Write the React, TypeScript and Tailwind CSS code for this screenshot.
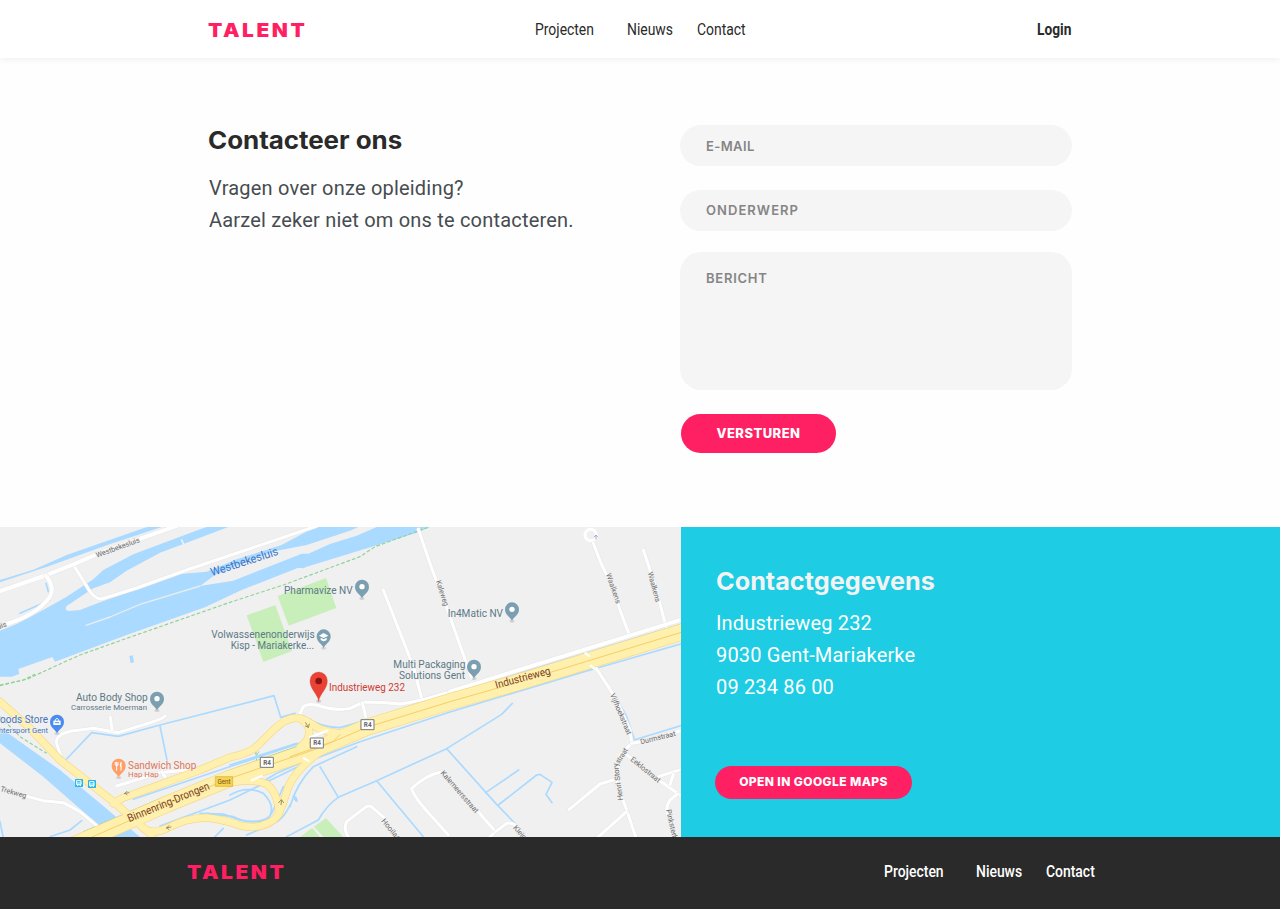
import React from 'react';

const water = '#aadaff';

function Pin({ x, y, color, children }: { x: number; y: number; color: string; children?: React.ReactNode }) {
  return (
    <g transform={`translate(${x} ${y})`}>
      <ellipse cx="0" cy="30" rx="8" ry="4" fill="#000" opacity=".12" />
      <path d="M0 30C-3 17-21 13-21-6A21 21 0 0 1 21-6C21 13 3 17 0 30Z" fill={color} />
      {children ?? <circle cx="0" cy="-6" r="8" fill="#fff" />}
    </g>
  );
}

function Shield({ x, y }: { x: number; y: number }) {
  return (
    <g transform={`translate(${x} ${y})`}>
      <rect x="-19" y="-15" width="38" height="30" fill="#fff" stroke="#777" strokeWidth="3" />
      <text x="0" y="7" textAnchor="middle" fontSize="19" fontWeight="700" fill="#666">R4</text>
    </g>
  );
}

function Road({ d, w = 9 }: { d: string; w?: number }) {
  return (
    <>
      <path d={d} stroke="#e6e6e6" strokeWidth={w + 3} />
      <path d={d} stroke="#fff" strokeWidth={w} />
    </>
  );
}

/** A map label squeezed or stretched to exactly `w` map units. */
function Label({ x, y, r = 0, w, size, fill, halo, children }: {
  x: number; y: number; r?: number; w: number; size?: number; fill?: string; halo?: boolean; children: string;
}) {
  return (
    <text
      transform={`translate(${x} ${y}) rotate(${r})`}
      fontSize={size}
      fill={fill}
      textLength={w}
      lengthAdjust="spacingAndGlyphs"
      stroke={halo === false ? 'none' : undefined}
    >
      {children}
    </text>
  );
}

const ramps = [
  'M0 545L90 625L180 720L340 845L455 945',
  'M340 850L370 833L450 805L600 750L690 712Q750 700 775 675L820 630Q860 590 895 594Q915 598 940 615Q970 638 1040 642',
  'M895 594Q925 605 928 635Q928 660 900 682',
  'M430 925Q460 945 500 925Q560 893 620 893Q680 900 725 918Q800 930 835 885Q850 850 865 800Q890 745 960 696',
  'M690 788Q760 775 800 792Q835 820 837 880',
];
const highway = 'M220 975L290 945L500 853L690 775L940 690L1100 622L1350 545L1550 488L1760 424L2060 332';

const mainRoads = [
  'M0 213L140 165L220 133L300 99L430 53L540 14',
  'M138 167Q165 200 150 230Q110 285 20 312L-5 325',
  'M1350 515L1550 452L2060 294',
];

const minorRoads = [
  'M222 137L262 202Q280 236 305 237L410 204L560 150L720 96L850 52L950 18',
  'M1150 210L1240 440L1265 535',
  'M1255 28L1295 145L1350 290L1415 475',
  'M1780 70L1803 130L1835 195L1860 270L1890 350',
  'M1930 90L1965 195L1998 320',
  'M898 585L910 560Q920 550 950 555Q1010 575 1050 565L1090 547Q1140 545 1200 552Q1260 545 1350 515',
  'M1087 548L1097 590',
  'M183 712L170 670Q165 645 210 634L280 625L355 638L460 605Q490 595 495 588',
  'M331 592L336 630',
  'M350 798L480 758L560 750',
  'M485 755L495 770',
  'M60 824L130 842L190 848L240 875L300 925',
  'M1320 757Q1280 765 1235 805Q1240 830 1300 895L1345 945',
  'M1155 895L1120 865Q1108 850 1088 868L1040 905Q1025 935 1060 970',
  'M1430 870L1487 935L1465 955',
  'M1487 935L1520 910Q1535 905 1550 920L1580 955',
  'M1785 440L1825 500L1850 540L1890 630L1895 670L1860 705L1850 790L1880 870L1910 960',
  'M1895 670L1925 665L2060 627',
  'M1875 700L1960 768L2060 840',
  'M1850 777L1800 792L1708 868',
  'M1880 875L1790 955',
  'M1975 770L2060 743',
  'M2032 822L2010 840Q1990 870 2010 900L2035 970',
  'M2020 762L2010 795',
];

const streams = [
  'M200 717L275 638L355 649L480 615L822 527L842 592L885 580',
  'M480 618L502 725',
  'M910 588Q960 622 1020 623L1100 600L1350 520L1550 463L2060 308',
  'M480 918L690 840L935 720L1080 665L1350 576L1740 459L2060 367',
  'M400 838L720 730L900 670',
  'M690 735L890 670',
  'M800 778L830 760L940 712',
  'M690 825Q740 795 790 820Q830 860 805 895Q750 915 700 890L620 880',
  'M600 880L670 882L720 900Q800 920 820 870L850 800',
  'M870 860Q890 790 940 740L1070 680',
  'M740 945L820 910Q850 900 870 855',
  'M960 740L1015 832',
  'M860 950L955 900Q980 855 1015 832L1130 782L1340 686L1505 583L1537 550',
  'M1130 782L1270 950',
  'M1340 686L1490 853L1545 910',
  'M1457 818L1556 750',
  'M1495 855L1610 765L1620 763L1656 787L1638 823L1656 848',
  'M1805 465L1835 510L1880 590L1902 655',
  'M1902 660L2060 612',
  'M150 950L210 930L245 902',
  'M0 905L10 955',
  'M640 955L670 925',
  'M60 280L150 240M138 190L145 215',
];

function CityMap() {
  return (
    <svg
      className="block h-[310px] w-[681px] shrink-0"
      viewBox="0 21 2043 930"
      fill="none"
      fontFamily="Roboto, sans-serif"
      strokeLinejoin="round"
      strokeLinecap="round"
    >
      <rect x="0" y="21" width="2043" height="930" fill="#f0f0f0" />
      <g fill={water}>
        <path d="M0 180L100 149L200 105L430 25L442 21H485L320 76L150 137L0 187Z" />
        <path d="M0 332L50 312L120 275L200 230L280 178L310 150L400 103L500 65L600 28L620 21H685L560 68L480 98L380 152L330 187L280 205L200 258Q192 270 205 273L240 270L310 243L540 162L620 155L710 118L845 75L945 21H1075L1050 32L920 75L830 92L720 133L645 165L600 198L700 182L890 107L905 101L925 101L990 72L1070 47L1130 21H1290L1250 38L1150 70L920 140L910 145L895 143L720 212L615 262L380 345L165 425L157 411L55 447L58 462L35 470L0 470Z" />
        <path d="M0 622L60 665L180 750L300 850L420 951H340L250 875L130 770L0 670Z" />
        <path d="M388 408L398 406L402 427L392 430Z" />
        <path d="M878 825Q895 828 893 847Q880 845 878 825Z" />
      </g>
      <path d="M258 316L330 291L420 253L600 198" stroke="#e8eeee" strokeWidth="4" />
      <path d="M545 60L550 70" stroke="#eef4f7" strokeWidth="5" />
      <g fill="#c8efba">
        <path d="M833 228L978 174L1009 264L866 317Z" />
        <path d="M740 286L826 255L876 393L790 426Z" />
        <path d="M900 951L937 924L960 951Z" />
        <path d="M942 920L978 894L1030 951H970Z" />
      </g>
      <g stroke="#8fd19a" strokeWidth="3.5" strokeDasharray="11 6" strokeLinecap="butt">
        <path d="M0 495L80 478L180 432L240 405L380 355L690 247L850 195L1080 110L1125 80L1285 22" />
        <path d="M0 497L70 480L105 463" />
        <path d="M0 590L60 650L140 700" />
      </g>
      <path d="M250 935L470 840L690 750L900 676M768 695L770 725M762 695L770 705L777 695" stroke="#99d5a0" strokeWidth="3" />
      <g stroke={water} strokeWidth="5">
        {streams.map((d) => <path key={d} d={d} />)}
      </g>
      {minorRoads.map((d) => <Road key={d} d={d} />)}
      {mainRoads.map((d) => <Road key={d} d={d} w={12} />)}
      <circle cx="1772" cy="45" r="17" fill="#f0f0f0" stroke="#fff" strokeWidth="9" />
      <path d="M1783 51L1788 45L1792 50M1788 47V57" stroke="#a5a5d6" strokeWidth="3" />
      <g stroke="#f5d98a">
        {ramps.map((d) => <path key={d} d={d} strokeWidth="24" />)}
        <path d={highway} strokeWidth="51" />
      </g>
      <g stroke="#fff0ae">
        {ramps.map((d) => <path key={d} d={d} strokeWidth="20" />)}
        <path d={highway} strokeWidth="47" />
      </g>
      <path d={highway} stroke="#f4cf6a" strokeWidth="3" />
      <path d="M1020 644L1000 664L870 710" stroke="#f4cf6a" strokeWidth="3" />
      <path d="M930 652L982 632M755 781L785 768M912 715L925 722M1757 400L1766 407M1772 437L1785 447" stroke="#fff" strokeWidth="7" />
      <g stroke="#9b9165" strokeWidth="3">
        <path d="M373 821L387 818M375 820L381 814M375 820L381 824M499 924L513 921M500 923L507 917M500 923L507 929M917 608L925 622M916 618L925 622L928 612M843 854L845 840M836 848L844 839L851 848" />
      </g>

      <Shield x={1103} y={614} />
      <Shield x={951} y={669} />
      <Shield x={801} y={727} />
      <rect x="647" y="770" width="51" height="29" fill="#fbd24d" stroke="#cfae42" strokeWidth="2" />
      <text x="672" y="791" textAnchor="middle" fontSize="19" fill="#6b5820">Gent</text>

      <g fontSize="22" fill="#6c6c6c" stroke="#f0f0f0" strokeWidth="4" paintOrder="stroke">
        <Label x={291} y={113} r={-20} w={138}>Westbekesluis</Label>
        <Label x={-22} y={334} r={-20} w={46}>sluis</Label>
        <Label x={1308} y={184} r={72} w={79}>Kaleweg</Label>
        <Label x={1818} y={163} r={71} w={94}>Waalkens</Label>
        <Label x={1943} y={158} r={75} w={92}>Waalkens</Label>
        <Label x={1830} y={524} r={67} w={132}>Vijfhoekstraat</Label>
        <Label x={1923} y={673} r={-14} w={108}>Durmstraat</Label>
        <Label x={1890} y={721} r={39} w={108}>Eeklostraat</Label>
        <Label x={1869} y={840} r={-98} w={112}>Henri Story</Label>
        <Label x={1858} y={732} r={-58} w={50}>straat</Label>
        <Label x={1998} y={870} r={77} w={140}>Pinksterbloem</Label>
        <Label x={1321} y={760} r={49} w={160}>Kalemeersstraat</Label>
        <Label x={1143} y={904} r={50} w={88}>Hooilaan</Label>
        <Label x={1538} y={924} r={48} w={60}>Kleine</Label>
        <Label x={0} y={813} r={16} w={80}>Trekweg</Label>
      </g>
      <Label x={636} y={169} r={-18} w={211} size={35} fill="#3d75c8">Westbekesluis</Label>
      <g fill="#783f1c" fontSize="33" stroke="#fff0ae" strokeWidth="3" paintOrder="stroke">
        <Label x={388} y={907} r={-22.5} w={263}>Binnenring-Drongen</Label>
        <Label x={1489} y={506} r={-15} w={170}>Industrieweg</Label>
      </g>

      <g fill="#5b7986" fontSize="31" stroke="#f0f0f0" strokeWidth="3" paintOrder="stroke">
        <Label x={852} y={221} w={206} halo={false}>Pharmavize NV</Label>
        <Label x={634} y={353} w={310} halo={false}>Volwassenenonderwijs</Label>
        <Label x={692} y={386} w={250} halo={false}>Kisp - Mariakerke...</Label>
        <Label x={1343} y={291} w={166}>In4Matic NV</Label>
        <Label x={1180} y={444} w={216}>Multi Packaging</Label>
        <Label x={1197} y={476} w={198}>Solutions Gent</Label>
        <Label x={228} y={542} w={215}>Auto Body Shop</Label>
        <Label x={213} y={571} w={228} size={24}>Carrosserie Moerman</Label>
      </g>
      <g stroke="#f0f0f0" strokeWidth="3" paintOrder="stroke">
        <Label x={-20} y={609} w={164} size={31} fill="#4873b8">Goods Store</Label>
        <Label x={-10} y={638} w={154} size={24} fill="#4873b8">Intersport Gent</Label>
        <Label x={384} y={746} w={205} size={31} fill="#df765a">Sandwich Shop</Label>
        <Label x={384} y={772} w={92} size={24} fill="#df765a">Hap Hap</Label>
        <Label x={987} y={514} w={228} size={31} fill="#d13a31">Industrieweg 232</Label>
      </g>

      <Pin x={1086} y={206} color="#7b9fb0" />
      <Pin x={1536} y={274} color="#7b9fb0" />
      <Pin x={1422} y={446} color="#7b9fb0" />
      <Pin x={471} y={542} color="#7b9fb0" />
      <Pin x={971} y={355} color="#7b9fb0">
        <path d="M-14-8L0-16L14-8L0-1ZM-9-2L0 3L9-2V5Q0 12-9 5Z" fill="#fff" />
      </Pin>
      <Pin x={171} y={611} color="#4a8bf0">
        <path d="M-5-8V-12Q0-20 5-12V-8" stroke="#fff" strokeWidth="3" />
        <path d="M-11-9H11V4H-11Z" fill="#fff" />
        <path d="M-5-3H5" stroke="#4a8bf0" strokeWidth="3" />
      </Pin>
      <Pin x={356} y={743} color="#ff9e67">
        <path d="M-6-16V8M-10-16V-8Q-6-2-2-8V-16M7-15V8M7-15Q1-7 7-2" stroke="#fff" strokeWidth="3" />
      </Pin>
      {[237, 276].map((x, i) => (
        <g key={x} transform={`translate(${x} ${789 + i * 3})`}>
          <rect x="-12" y="-12" width="24" height="24" rx="2" fill="#20b8ee" />
          <path d="M-6-7H6V5H-6ZM-4 5V8M4 5V8M-6 0H6" stroke="#fff" strokeWidth="3" />
        </g>
      ))}
      <ellipse cx="956" cy="544" rx="8" ry="4" fill="#000" opacity=".15" />
      <path d="M956 543C952 520 930 508 930 482A26 26 0 0 1 982 482C982 508 960 520 956 543Z" fill="#ea4335" stroke="#cf3b30" strokeWidth="1" />
      <circle cx="956" cy="483" r="10" fill="#8c1111" />
    </svg>
  );
}

function Logo() {
  return (
    <span className="block w-[97px] origin-left scale-x-[1.1] whitespace-nowrap pt-px font-['Inter'] text-[19px] leading-6 font-black tracking-[2.3px] text-[#ff1f63]">
      TALENT
    </span>
  );
}

function NavLinks({ className }: { className: string }) {
  const link = 'block origin-left scale-x-[0.87] whitespace-nowrap';
  return (
    <nav className={`flex text-base leading-6 ${className}`}>
      <a className="w-[92px]"><span className={link}>Projecten</span></a>
      <a className="w-[70px]"><span className={link}>Nieuws</span></a>
      <a className="w-[49px]"><span className={link}>Contact</span></a>
    </nav>
  );
}

const field =
  "block bg-[#f5f5f5] w-full px-[26px] font-['Inter'] text-[13px] font-semibold text-[#858585] outline-none placeholder:text-[#858585] placeholder:opacity-100";

export default function App() {
  return (
    <div className="flex h-[909px] w-[1280px] flex-col overflow-hidden bg-[#fefefe] font-['Roboto',sans-serif] text-[#2a2a2a]">
      <header className="z-10 h-[58px] shrink-0 bg-white shadow-[0_1px_7px_rgba(0,0,0,0.07)]">
        <div className="mx-auto flex w-[864px] pt-[18px]">
          <Logo />
          <NavLinks className="ml-[230px]" />
          <a className="ml-auto w-[35px] leading-6 font-bold">
            <span className="block origin-left scale-x-[0.86]">Login</span>
          </a>
        </div>
      </header>

      <main className="mx-auto flex h-[469px] w-[864px] shrink-0 justify-between pt-[67px]">
        <section>
          <h1 className="mt-[-1px] origin-left scale-x-[1.06] whitespace-nowrap font-['Inter'] text-[24.5px] leading-8 font-bold tracking-[-0.05px]">Contacteer ons</h1>
          <p className="mt-[16px] ml-px whitespace-nowrap text-xl leading-8 tracking-[0.2px] text-[#474c50]">
            Vragen over onze opleiding?<br />
            Aarzel zeker niet om ons te contacteren.
          </p>
        </section>
        <form className="w-[392px]">
          <input className={`${field} h-[41px] rounded-full tracking-[0.4px]`} placeholder="E-MAIL" />
          <input className={`${field} mt-[24px] h-[41px] rounded-full pb-[2px] tracking-[1.05px]`} placeholder="ONDERWERP" />
          <textarea className={`${field} mt-[21px] h-[138px] resize-none rounded-[21px] pt-[17px] tracking-[0.75px]`} placeholder="BERICHT" />
          <button type="button" className="mt-[24px] ml-px block h-[39px] w-[155px] rounded-full bg-[#ff1f63] font-['Inter'] text-[13px] font-extrabold tracking-[0.45px] text-white">
            VERSTUREN
          </button>
        </form>
      </main>

      <section className="flex h-[310px] shrink-0">
        <CityMap />
        <div className="flex-1 bg-[#1ecce3] pl-[35px] text-white">
          <h2 className="mt-[38px] origin-left scale-x-[1.03] whitespace-nowrap font-['Inter'] text-[24.5px] leading-8 font-bold text-[#f3f3f3]">Contactgegevens</h2>
          <address className="mt-[10px] text-xl leading-8 tracking-[0.16px] not-italic">
            Industrieweg 232<br />9030 Gent-Mariakerke<br />09 234 86 00
          </address>
          <button type="button" className="mt-[63px] ml-[-1px] block h-[33px] w-[197px] rounded-full bg-[#ff1f63] pb-[2px] font-['Inter'] text-[12px] font-extrabold tracking-[0.4px] whitespace-nowrap">
            OPEN IN GOOGLE MAPS
          </button>
        </div>
      </section>

      <footer className="h-[72px] shrink-0 bg-[#2a2a2a] pt-[23px] text-white">
        <div className="flex pl-[187px]">
          <Logo />
          <NavLinks className="ml-[600px] font-medium" />
        </div>
      </footer>
    </div>
  );
}
